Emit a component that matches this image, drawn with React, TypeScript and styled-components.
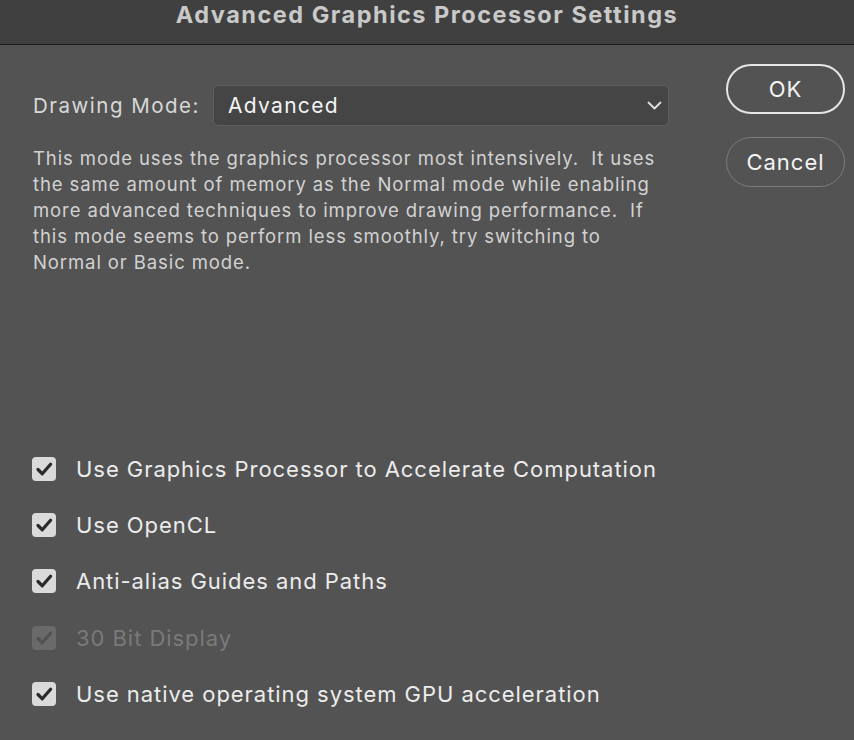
import React from 'react'
import styled, { createGlobalStyle } from 'styled-components'

const GlobalStyle = createGlobalStyle`
  html, body {
    margin: 0;
    padding: 0;
    background: #535353;
  }
  body {
    font-family: Inter, "Liberation Sans", sans-serif;
  }
`

const descLines = [
  'This mode uses the graphics processor most intensively.\u00a0 It uses',
  'the same amount of memory as the Normal mode while enabling',
  'more advanced techniques to improve drawing performance.\u00a0 If',
  'this mode seems to perform less smoothly, try switching to',
  'Normal or Basic mode.',
]

const options = [
  { label: 'Use Graphics Processor to Accelerate Computation', disabled: false },
  { label: 'Use OpenCL', disabled: false },
  { label: 'Anti-alias Guides and Paths', disabled: false },
  { label: '30 Bit Display', disabled: true },
  { label: 'Use native operating system GPU acceleration', disabled: false },
]

const CheckMark = () => (
  <svg width="24" height="24" viewBox="0 0 24 24">
    <path d="M6 12.5 L10.3 16.8 L18.6 7.2" fill="none" stroke="currentColor" strokeWidth="3.2" strokeLinecap="round" strokeLinejoin="round" />
  </svg>
)

const App = () => {
  return (
    <Window>
      <GlobalStyle />
      <TitleBar>Advanced Graphics Processor Settings</TitleBar>
      <Body>
        <Main>
          <ModeRow>
            <Label>Drawing Mode:</Label>
            <Select>
              <span>Advanced</span>
              <svg width="15" height="9" viewBox="0 0 15 9">
                <path d="M1.5 1.5 L7.5 7.5 L13.5 1.5" fill="none" stroke="#e0e0e0" strokeWidth="1.8" strokeLinecap="round" strokeLinejoin="round" />
              </svg>
            </Select>
          </ModeRow>
          <Description>
            {descLines.map((l) => (
              <div key={l}>{l}</div>
            ))}
          </Description>
        </Main>
        <Buttons>
          <PillButton primary>OK</PillButton>
          <PillButton>Cancel</PillButton>
        </Buttons>
      </Body>
      <Options>
        {options.map((o) => (
          <OptionRow key={o.label} disabled={o.disabled}>
            <Box disabled={o.disabled}>
              <CheckMark />
            </Box>
            <span>{o.label}</span>
          </OptionRow>
        ))}
      </Options>
    </Window>
  )
}

const Window = styled.div`
  width: 854px;
  height: 740px;
  background: #535353;
  display: flex;
  flex-direction: column;
  overflow: hidden;
`

const TitleBar = styled.div`
  height: 45px;
  background: #404040;
  border-bottom: 1px solid #1c1c1c;
  color: #c9c9c9;
  font-weight: 700;
  font-size: 23.5px;
  letter-spacing: 1.5px;
  display: flex;
  align-items: flex-start;
  justify-content: center;
  line-height: 30px;
  box-sizing: border-box;
  flex-shrink: 0;
`

const Body = styled.div`
  display: flex;
  padding: 19px 10px 0 33px;
  height: 369px;
  box-sizing: border-box;
`

const Main = styled.div`
  width: 636px;
  display: flex;
  flex-direction: column;
`

const ModeRow = styled.div`
  display: flex;
  align-items: center;
  margin-top: 21px;
  gap: 12px;
`

const Label = styled.span`
  width: 168px;
  font-size: 20.5px;
  letter-spacing: 1.5px;
  color: #d8d8d8;
  white-space: nowrap;
`

const Select = styled.div`
  width: 456px;
  height: 41px;
  box-sizing: border-box;
  background: #454545;
  border: 1.5px solid #5e5e5e;
  border-radius: 5px;
  display: flex;
  align-items: center;
  justify-content: space-between;
  padding: 0 6px 0 14px;
  font-size: 21px;
  letter-spacing: 1.3px;
  color: #f4f4f4;
`

const Description = styled.div`
  margin-top: 19px;
  font-size: 18.5px;
  line-height: 26px;
  letter-spacing: 0.9px;
  color: #d2d2d2;
  white-space: nowrap;
`

const Buttons = styled.div`
  display: flex;
  flex-direction: column;
  gap: 23px;
  margin-left: 57px;
`

const PillButton = styled.button<{ primary?: boolean }>`
  width: 119px;
  height: 50px;
  box-sizing: border-box;
  border-radius: 25px;
  background: transparent;
  border: ${(p) => (p.primary ? '2px solid #e6e6e6' : '1.5px solid #7c7c7c')};
  color: #f4f4f4;
  font-family: inherit;
  font-size: 22px;
  letter-spacing: 1px;
  cursor: pointer;
`

const Options = styled.div`
  display: flex;
  flex-direction: column;
  gap: 30.2px;
  padding: 42px 0 0 32px;
`

const OptionRow = styled.label<{ disabled?: boolean }>`
  display: flex;
  align-items: center;
  gap: 20px;
  height: 26px;
  font-size: 22px;
  letter-spacing: 0.95px;
  color: ${(p) => (p.disabled ? '#7a7a7a' : '#ececec')};
  white-space: nowrap;
`

const Box = styled.span<{ disabled?: boolean }>`
  width: 24px;
  height: 24px;
  border-radius: 4px;
  background: ${(p) => (p.disabled ? '#6a6a6a' : '#dadada')};
  color: ${(p) => (p.disabled ? '#525252' : '#2a2a2a')};
  display: flex;
  align-items: center;
  justify-content: center;
  flex-shrink: 0;
`

export default App
